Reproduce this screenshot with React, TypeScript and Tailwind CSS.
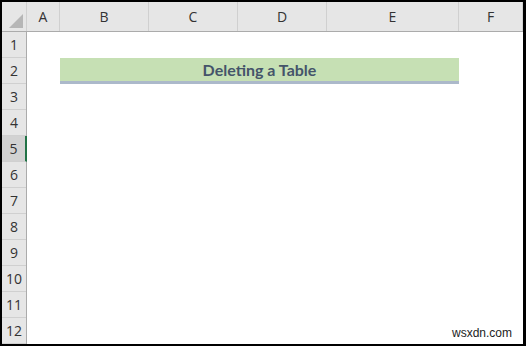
const columns = [
  { label: 'A', width: 'w-[33px]' },
  { label: 'B', width: 'w-[89px]' },
  { label: 'C', width: 'w-[89px]' },
  { label: 'D', width: 'w-[89px]' },
  { label: 'E', width: 'w-[132px]' },
  { label: 'F', width: 'w-[64px]' },
];

const rows = Array.from({ length: 12 }, (_, i) => i + 1);

const App = () => {
  return (
    <div className="w-[526px] h-[346px] bg-black pt-[2px] pl-[2px] pr-[3px] pb-[2px] font-['Liberation_Sans',sans-serif]">
      <div className="relative w-[521px] h-[342px] bg-white overflow-hidden">
        {/* Column headers */}
        <div className="flex h-[30px] bg-[#e6e6e6] border-b border-[#ababab]">
          <div className="relative w-[25px] border-r border-[#d0d0d0]">
            <div className="absolute right-[3px] bottom-[3px] w-0 h-0 border-l-[14px] border-l-transparent border-b-[14px] border-b-[#b6b6b6]"></div>
          </div>
          {columns.map((col) => (
            <div
              key={col.label}
              className={`${col.width} flex items-center justify-center border-r border-[#d0d0d0] text-[14px] text-[#333] font-['Open_Sans',sans-serif]`}
            >
              {col.label}
            </div>
          ))}
        </div>

        {/* Body */}
        <div className="flex">
          {/* Row headers */}
          <div className="w-[25px] border-r border-[#ababab]">
            {rows.map((r) => (
              <div
                key={r}
                className={`h-[26px] flex items-center justify-center border-b border-[#d0d0d0] text-[14px] text-[#333] font-['Open_Sans',sans-serif] ${
                  r === 5 ? 'bg-[#d2d2d2] border-r-2 border-r-[#217346] -mr-px' : 'bg-[#e6e6e6]'
                }`}
              >
                {r}
              </div>
            ))}
          </div>

          {/* Cells */}
          <div className="flex-1">
            <div className="h-[26px]"></div>
            <div className="h-[26px] pl-[33px]">
              <div className="w-[399px] h-[26px] bg-[#c6e0b4] border-b-[3px] border-[#acb9ca] flex items-center justify-center">
                <span className="text-[16px] font-bold text-[#44546a] font-['Lato',sans-serif]">
                  Deleting a Table
                </span>
              </div>
            </div>
          </div>
        </div>

        {/* Watermark */}
        <div className="absolute right-[9px] bottom-[5px] text-[12px] text-[#222] bg-white px-[2px] leading-none">
          wsxdn.com
        </div>
      </div>
    </div>
  );
};

export default App;
